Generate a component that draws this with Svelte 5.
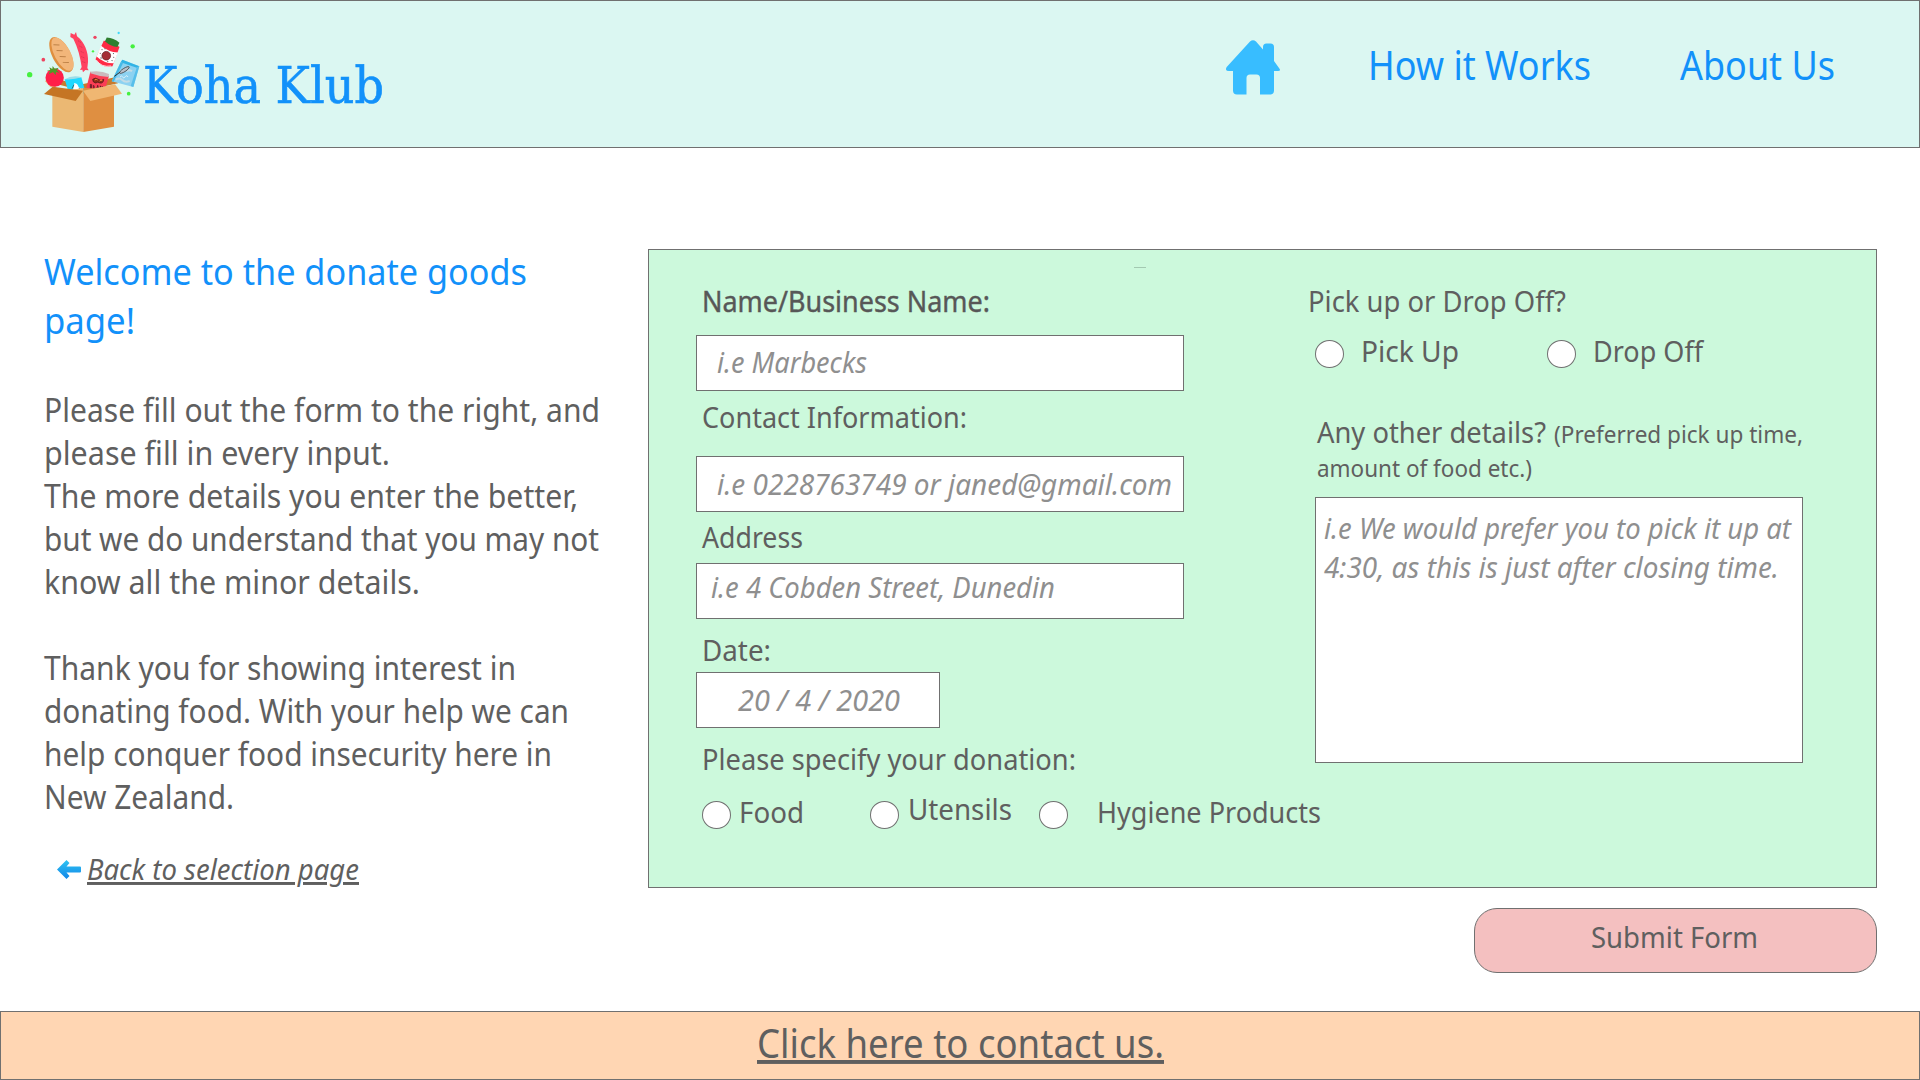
<script>
  const intro = [
    ['Please fill out the form to the right, and', 556],
    ['please fill in every input.', 346],
    ['The more details you enter the better,', 534],
    ['but we do understand that you may not', 555],
    ['know all the minor details.', 376],
  ];
  const thanks = [
    ['Thank you for showing interest in', 472],
    ['donating food. With your help we can', 525],
    ['help conquer food insecurity here in', 508],
    ['New Zealand.', 190],
  ];
</script>

{#snippet line(text, width, kind = 'plain', height = 38, base = 29)}
  <svg class="line {kind}" {width} {height}>
    <text x="0" y={base} textLength={width} lengthAdjust="spacingAndGlyphs">{text}</text>
  </svg>
{/snippet}

<div class="page">
  <header>
    <a class="brand" href="#home">
      <svg class="logo" viewBox="0 0 390 375" width="130" height="125">
        <circle cx="29" cy="164" r="8" fill="#45f03f" />
        <circle cx="338" cy="79" r="6.500" fill="#45f03f" />
        <circle cx="326" cy="221" r="5.500" fill="#45f03f" />
        <circle cx="219" cy="94" r="3.500" fill="#45f03f" />
        <circle cx="70" cy="119" r="5.500" fill="#ee4460" />
        <circle cx="225" cy="52" r="5" fill="#ee4460" />
        <circle cx="296" cy="39" r="3.500" fill="#3fd8fb" />
        <path d="M75 183L97 177L190 192L285 172L294 190L190 213Z" fill="#c87a2c" />
        <path d="M75 183L98 178L110 205L90 200Z" fill="#efb678" />
        <g transform="rotate(-28 124 104)">
          <ellipse cx="124" cy="104" rx="27" ry="58" fill="#df8f3f" />
          <ellipse cx="128" cy="104" rx="24" ry="55" fill="#f2b67a" />
          <path d="M118 67l14 8M118 87l14 8M118 107l14 8M118 127l14 8" stroke="#bd8147" stroke-width="3" stroke-linecap="round" />
        </g>
        <path d="M152 39L163 44L168 36L171 49C193 66 206 96 204 126L202 144L206 151L196 150L189 157L187 149L180 150L185 141C181 112 174 84 160 56L151 51Z" fill="#ff4260" />
        <path d="M174 62l9 6M178 78l10 5M182 94l10 5M184 110l10 4M187 125l9 3" stroke="#cf304d" stroke-width="2.500" stroke-dasharray="4 2" />
        <g transform="rotate(22 262 102)">
          <path d="M237 69Q262 59 288 69L290 130Q262 149 235 130Z" fill="#ff2b45" />
          <path d="M235 86Q262 95 290 86V121Q262 132 235 121Z" fill="#fff" />
          <path d="M241 96h3M240 108h3M277 94h3M282 104h3M281 115h3M247 120h4M270 122h3M248 90h3" stroke="#555" stroke-width="3" />
          <circle cx="261" cy="108" r="13" fill="#a52d35" stroke="#632129" stroke-width="2" />
          <path d="M242 57Q262 51 283 57L282 71Q262 77 241 69Z" fill="#2f7f30" />
          <path d="M238 131Q261 147 286 131" fill="none" stroke="#fff" stroke-width="2" />
        </g>
        <path d="M307 119L358 139L340 201L275 184L302 127Z" fill="#8dd2f1" />
        <path d="M307 119L358 139L350 143L302 127Z" fill="#31b4e5" />
        <path d="M358 139L340 201L332 198L350 143Z" fill="#57bfea" />
        <path d="M302 127L275 184L281 185L309 130Z" fill="#45b9e7" />
        <path d="M287 179q12-7 20 1t22 3M319 154q9-7 17 0" fill="none" stroke="#c4dce6" stroke-width="6" />
        <path d="M283 169L302 155" stroke="#333" stroke-width="3" />
        <ellipse cx="313" cy="150" rx="17" ry="5" transform="rotate(-33 313 150)" fill="#b6bfca" stroke="#333" stroke-width="2" />
        <path d="M300 171q5-6 8 0t8-1 8 1" fill="none" stroke="#fff" stroke-width="2" />
        <circle cx="104" cy="173" r="27.500" fill="#ff1f49" />
        <path d="M80 151L91 151L88 142L97 147L98 138L104 146L116 143L110 151L119 158L108 156L107 166L99 156L86 163L90 154Z" fill="#519926" />
        <path d="M134 178L184 172L198 222L145 214Z" fill="#20d8ff" />
        <path d="M134 178Q158 164 185 172Q162 180 134 178Z" fill="#9bdde8" />
        <path d="M162 190Q172 188 176 202Q188 208 190 220L154 215Q163 206 162 190Z" fill="#fff" />
        <path d="M162 194l-6 12M177 204l6 10" stroke="#333" stroke-width="2" />
        <path d="M211 155L267 168L253 214L196 217Z" fill="#fb3e55" />
        <path d="M211 155Q242 150 267 162L266 171Q238 170 211 160Z" fill="#cbbabd" />
        <path d="M218 178q8-7 17 0t16 0q-1 13-11 11-7-5-13 0-9-1-9-11z" fill="#8b2c17" stroke="#3d1715" stroke-width="2" />
        <path d="M224 180q5-4 9 0M239 183q4-5 8-1" stroke="#fb873c" stroke-width="3" fill="none" />
        <path d="M211 193v12M211 194h4v5h-4M215 199v5h-4M221 195v12h5M221 201h4M230 209l3-13 4 13M231 205h5M241 197v11M241 198l6 10V198" stroke="#501b20" stroke-width="2.500" fill="none" />
        <path d="M97 219L190 204V336L97 320Z" fill="#ebb873" />
        <path d="M190 204L282 208V320L190 336Z" fill="#df8f41" />
        <path d="M98 200L189 212L167 243L72 222Z" fill="#c57524" />
        <path d="M189 212L285 193L306 221L211 243Z" fill="#f0b772" />
      </svg>
      <span class="brand-name">{@render line('Koha Klub', 241, 'serif', 60, 46)}</span>
    </a>
    <nav>
      <a class="home" href="#home" aria-label="Home">
        <svg viewBox="0 0 54 55" width="54" height="55">
          <path d="M24 1.500Q27 -1.200 30 1.500L37 9.500V7Q37 3.500 40.500 3.500H44.500Q48 3.500 48 7V21L53 28Q55.500 31 52 31H48V50.500Q48 54.500 44 54.500H34V38Q34 34.500 30.500 34.500H24Q20.500 34.500 20.500 38V54.500H11Q7 54.500 7 50.500V31H3Q-1.500 31 .7 27Z" fill="#38bdff" />
        </svg>
      </a>
      <a class="how" href="#how">{@render line('How it Works', 223, 'nav', 50, 39)}</a>
      <a class="about" href="#about">{@render line('About Us', 155, 'nav', 50, 39)}</a>
    </nav>
  </header>

  <main>
    <section class="intro">
      <h1>
        {@render line('Welcome to the donate goods', 483, 'title', 49, 37)}
        {@render line('page!', 91, 'title', 49, 37)}
      </h1>
      <div class="para first-para">
        {#each intro as [text, width]}{@render line(text, width, 'body', 43, 32)}{/each}
      </div>
      <div class="para">
        {#each thanks as [text, width]}{@render line(text, width, 'body', 43, 32)}{/each}
      </div>
      <a class="back" href="#selection">
        <svg viewBox="0 0 24 19" width="24" height="19">
          <defs>
            <linearGradient id="arrow" x1="0" y1="0" x2="0" y2="1">
              <stop offset="0" stop-color="#2fc4f2" />
              <stop offset="1" stop-color="#1286e8" />
            </linearGradient>
          </defs>
          <path d="M0 9.500L9.500 0L12.500 3L9.500 6.500H23Q24 6.500 24 7.500V11.500Q24 12.500 23 12.500H9.500L12.500 16L9.500 19Z" fill="url(#arrow)" />
        </svg>
        {@render line('Back to selection page', 272, 'italic link')}
      </a>
    </section>

    <div class="form-side">
      <form>
        <span class="dash"></span>
        <div class="col left">
          <div class="label name">{@render line('Name/Business Name:', 288, 'strong')}</div>
          <div class="field first">{@render line('i.e Marbecks', 150, 'italic hint')}</div>
          <div class="label contact">{@render line('Contact Information:', 265)}</div>
          <div class="field second">{@render line('i.e 0228763749 or janed@gmail.com', 455, 'italic hint')}</div>
          <div class="label address">{@render line('Address', 101)}</div>
          <div class="field third">{@render line('i.e 4 Cobden Street, Dunedin', 344, 'italic hint')}</div>
          <div class="label date">{@render line('Date:', 69)}</div>
          <div class="field fourth">{@render line('20 / 4 / 2020', 162, 'italic hint')}</div>
          <div class="label donation">{@render line('Please specify your donation:', 374)}</div>
          <div class="options goods">
            <span class="radio"></span>
            <span class="food">{@render line('Food', 65)}</span>
            <span class="radio"></span>
            <span class="utensils">{@render line('Utensils', 104)}</span>
            <span class="radio"></span>
            <span class="hygiene">{@render line('Hygiene Products', 224)}</span>
          </div>
        </div>
        <div class="col right">
          <div class="label pickup">{@render line('Pick up or Drop Off?', 258)}</div>
          <div class="options transfer">
            <span class="radio"></span>
            <span class="up">{@render line('Pick Up', 98)}</span>
            <span class="radio"></span>
            <span class="off">{@render line('Drop Off', 110)}</span>
          </div>
          <div class="label details">
            {@render line('Any other details?', 229)}
            {@render line('(Preferred pick up time,', 249, 'small')}
          </div>
          <div class="label more">{@render line('amount of food etc.)', 215, 'small', 31, 24)}</div>
          <div class="area">
            {@render line('i.e We would prefer you to pick it up at', 467, 'italic hint')}
            {@render line('4:30, as this is just after closing time.', 455, 'italic hint', 38, 30)}
          </div>
        </div>
      </form>
      <button type="button">{@render line('Submit Form', 167)}</button>
    </div>
  </main>

  <footer>
    <a href="#contact">{@render line('Click here to contact us.', 407, 'footer-link', 52, 39)}</a>
  </footer>
</div>

<style>
  :global(body) { margin: 0; background: #fff; }
  * { box-sizing: border-box; }
  .page {
    width: 1920px;
    height: 1080px;
    display: flex;
    flex-direction: column;
    overflow: hidden;
    font-family: "Noto Sans", "Open Sans", sans-serif;
  }
  a { text-decoration: none; color: inherit; }
  svg { display: block; flex: none; }

  .line { overflow: visible; }
  .line text { fill: #5f5f5f; font-size: 29.4px; }
  .strong text { fill: #575757; stroke: #575757; stroke-width: 0.4px; }
  .small text { font-size: 23.5px; }
  .body text { font-size: 32.3px; }
  .title text { font-size: 36.4px; fill: #1291fa; }
  .nav text { font-size: 39.2px; fill: #1291fa; }
  .serif text {
    font-family: "DejaVu Serif Condensed", "DejaVu Serif", serif;
    font-size: 51px;
    fill: #1291fa;
    stroke: #1291fa;
    stroke-width: 0.6px;
  }
  .italic text { font-style: italic; }
  .hint text { fill: #8f8f8f; }
  .link text { text-decoration: underline; text-decoration-thickness: 2px; text-underline-offset: 3px; }
  .footer-link text {
    font-size: 39.2px;
    text-decoration: underline;
    text-decoration-thickness: 2px;
    text-underline-offset: 3px;
  }

  header {
    height: 148px;
    flex: none;
    display: flex;
    justify-content: space-between;
    border: 1px solid #707070;
    background: #dbf7f2;
  }
  .brand { display: flex; padding: 19px 0 0 19px; }
  .brand-name { margin: 37px 0 0 -7px; }
  nav { display: flex; align-items: flex-start; padding: 39px 84px 0 0; }
  .how { margin: 1px 0 0 88px; }
  .about { margin: 1px 0 0 89px; }

  main { display: flex; height: 863px; flex: none; padding: 101px 43px 0 44px; }
  .intro { width: 604px; flex: none; margin-top: -1px; }
  h1 { margin: 0; font-weight: 400; }
  .para { margin-top: 43px; }
  .first-para { margin-top: 44px; }
  .back { display: flex; align-items: flex-start; margin: 31px 0 0 13px; gap: 6px; }
  .back > svg:first-child { margin-top: 9px; }

  .form-side { width: 1229px; display: flex; flex-direction: column; align-items: flex-end; }
  form {
    position: relative;
    width: 1229px;
    height: 639px;
    flex: none;
    display: grid;
    grid-template-columns: 619px 488px;
    padding: 33px 0 0 47px;
    border: 1px solid #707070;
    background: #ccf9dc;
  }
  .dash {
    position: absolute;
    left: 485px;
    top: 17px;
    width: 12px;
    height: 1px;
    background: #a3c9b1;
  }
  .label { margin-left: 6px; }
  .field {
    width: 488px;
    height: 56px;
    border: 1px solid #707070;
    background: #fff;
  }
  .first { margin-top: 14px; padding: 8px 0 0 20px; }
  .contact { margin-top: 8px; }
  .second { margin-top: 19px; padding: 9px 0 0 20px; }
  .address { margin-top: 7px; }
  .third { margin-top: 6px; padding: 5px 0 0 14px; }
  .date { margin-top: 13px; }
  .fourth { margin-top: 2px; width: 244px; padding: 9px 0 0 41px; }
  .donation { margin-top: 13px; }

  .options { display: flex; align-items: flex-start; height: 38px; }
  .radio {
    width: 29px;
    height: 28px;
    flex: none;
    margin-top: 7px;
    border: 1px solid #707070;
    border-radius: 50%;
    background: #fff;
  }
  .goods { margin: 15px 0 0 6px; }
  .food { margin: 0 66px 0 8px; }
  .utensils { margin: -3px 27px 0 9px; }
  .hygiene { margin-left: 29px; }

  .pickup { margin-left: -7px; }
  .transfer { margin-top: 12px; }
  .up { margin: 0 88px 0 17px; }
  .off { margin-left: 17px; }
  .details { display: flex; gap: 8px; margin: 43px 0 0 2px; }
  .more { margin: 1px 0 0 2px; }
  .area {
    width: 488px;
    height: 266px;
    margin-top: 13px;
    padding: 12px 0 0 8px;
    border: 1px solid #707070;
    background: #fff;
  }
  button {
    width: 403px;
    height: 65px;
    margin-top: 20px;
    padding: 0 3px 5px 0;
    display: flex;
    justify-content: center;
    align-items: center;
    border: 1px solid #707070;
    border-radius: 23px;
    background: #f4c0c0;
    font-family: inherit;
  }
  footer {
    height: 69px;
    flex: none;
    display: flex;
    justify-content: center;
    padding-top: 7px;
    border: 1px solid #707070;
    background: #ffd6b3;
  }
</style>
